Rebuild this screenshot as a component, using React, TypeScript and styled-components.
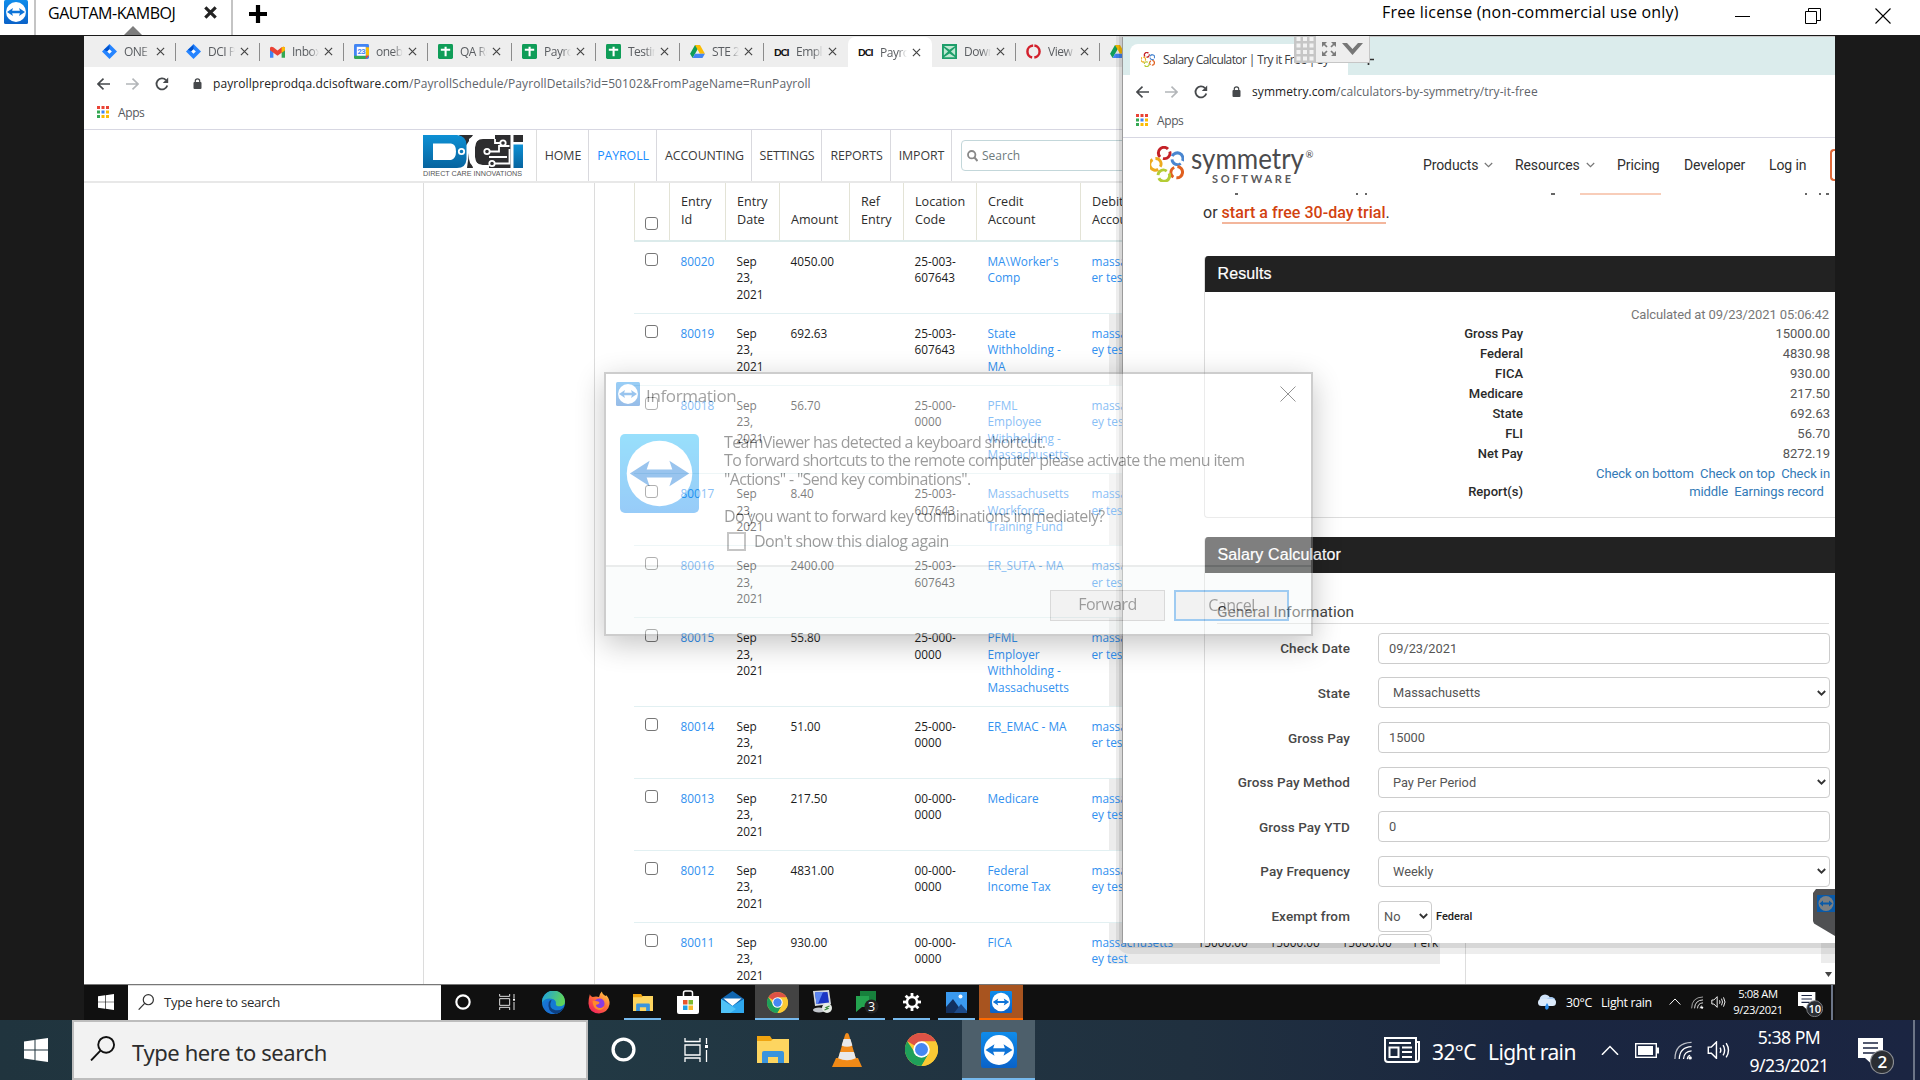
import React from "react";
import styled, { createGlobalStyle, css } from "styled-components";

const ui = `"Open Sans", "Noto Sans", sans-serif`;
const noto = `"Noto Sans", "Open Sans", sans-serif`;
const roboto = `Roboto, "Liberation Sans", sans-serif`;

const Global = createGlobalStyle`
  html, body { margin: 0; padding: 0; }
  body { width: 1920px; height: 1080px; overflow: hidden; background: #1a1a1a; font-family: ${ui}; }
  * { box-sizing: border-box; }
  svg { display: block; flex: none; }
`;

/* ---------- outer shell ---------- */
const Shell = styled.div`
  width: 1920px; height: 1080px; display: flex; flex-direction: column; background: #1a1a1a; overflow: hidden;
`;
const TitleBar = styled.header`
  height: 36px; flex: none; background: #fff; border-bottom: 1px solid #1a1a1a; display: flex; align-items: stretch;
`;
const TitleLogo = styled.div`
  width: 36px; padding-left: 4px; border-right: 2px solid #c4c4c4;
`;
const SessionTab = styled.div`
  width: 197px; border-right: 2px solid #c4c4c4; padding: 2px 14px 0 12px; display: flex; align-items: flex-start; justify-content: space-between; position: relative;
  font-size: 16px; line-height: 22px; color: #000; white-space: nowrap; letter-spacing: -0.45px;
  svg { margin-top: 4px; }
  &::after { content: ""; position: absolute; left: 88px; bottom: 0; border: 9px solid transparent; border-bottom-color: #7d7d7d; border-top: 0; }
`;
const NewTab = styled.div` padding: 5px 0 0 16px; flex: 1; `;
const License = styled.div`
  font-size: 16px; line-height: 24px; color: #000; white-space: nowrap; width: 351px; letter-spacing: 0.19px;
`;
const WindowButtons = styled.div`
  display: flex; width: 187px; gap: 54px; padding: 8px 0 0 2px;
`;
const Session = styled.main`
  flex: none; height: 984px; padding: 0 85px 0 84px; background: #1a1a1a;
`;
const Desktop = styled.div`
  position: relative; width: 1751px; height: 984px; background: #fff; overflow: hidden; display: flex; flex-direction: column;
`;

/* ---------- browser chrome ---------- */
const Browser = styled.section` height: 948px; display: flex; flex-direction: column; background: #fff; overflow: hidden; position: relative; `;
const TabStrip = styled.div` height: 31px; flex: none; background: #eee; display: flex; padding-left: 8px; `;
const Tab = styled.div<{ $active?: boolean; $line?: boolean }>`
  width: 84px; flex: none; padding: 0 10px; display: flex; align-items: center; font-size: 12px; letter-spacing: -0.5px; color: #5a5d61; position: relative;
  ${p => p.$line && css`&::after { content: ""; position: absolute; right: 0; top: 7px; height: 18px; width: 1px; background: #8c8c8c; }`}
  ${p => p.$active && css`background: #fff; border-radius: 7px 7px 0 0; margin-top: 1px;`}
`;
const TabText = styled.span`
  width: 27px; margin: 0 5px 0 7px; overflow: hidden; white-space: nowrap; mask-image: linear-gradient(to right, #000 65%, transparent 100%);
`;
const DciMark = styled.b` width: 15px; font: 900 10px/12px "Lato", sans-serif; color: #111; letter-spacing: -0.9px; `;
const AddressRow = styled.div`
  height: 33px; flex: none; display: flex; align-items: center; padding-left: 13px; white-space: nowrap;
`;
const NavIcons = styled.div` display: flex; gap: 16px; width: 106px; align-items: center; svg:last-child { margin-left: 8px; } `;
const Url = styled.span<{ $ls: number }>`
  font-size: 12px; color: #60646a; margin-left: 10px; letter-spacing: ${p => p.$ls}px; b { font-weight: 400; color: #222; }
`;
const Bookmarks = styled.div`
  height: 30px; flex: none; border-bottom: 1px solid #d7d7e2; padding: 0 0 5px 13px; display: flex; align-items: center; gap: 9px; font-size: 12px; letter-spacing: -0.4px; color: #55585c;
`;

/* ---------- payroll site ---------- */
const SiteHeader = styled.div` height: 53px; flex: none; border-bottom: 2px solid #e8e8e8; display: flex; padding-left: 339px; `;
const Logo = styled.div` width: 114px; padding-top: 5px; border-right: 1px solid #ddd; `;
const MenuItem = styled.div<{ $w: number; $on?: boolean }>`
  width: ${p => p.$w}px; flex: none; border-right: 1px solid #d9d9de; display: flex; align-items: center; justify-content: center; font-size: 12.4px; letter-spacing: -0.1px; padding-left: 1px;
  color: ${p => (p.$on ? "#1a8cff" : "#3b3b3b")};
`;
const SearchField = styled.div`
  margin: 10px 0 0 9px; width: 260px; height: 31px; border: 1px solid #c3d7da; border-radius: 4px; display: flex; align-items: center; gap: 4px; padding-left: 5px; font-size: 12px; color: #6d7a7d;
`;
const SiteBody = styled.div` flex: 1; display: flex; overflow: hidden; `;
const Gutter = styled.div<{ $w: number }>` width: ${p => p.$w}px; flex: none; border-right: 1px solid #dcdcdc; `;
const Entries = styled.div` margin-left: 39px; width: 832px; flex: none; border-right: 1px solid #ddd; `;
const grid = css` display: grid; grid-template-columns: 35px 56px 54px 70px 54px 73px 104px 106px 72px 72px 72px 60px; `;
const HeadRow = styled.div`
  ${grid} height: 58.5px; border-bottom: 2px solid #dcebeb; font-size: 12.6px; line-height: 18.3px; color: #2c2c2c;
`;
const HeadCell = styled.div`
  display: flex; align-items: flex-end; padding: 0 0 10px 11px; border-left: 1px solid #e3e3d6; white-space: pre;
`;
const Row = styled.div<{ $tall?: boolean; $last?: boolean }>`
  ${grid} height: ${p => (p.$tall ? 88.5 : 72)}px; border-bottom: 1px solid #e2f0f2; font-size: 11.8px; line-height: 16.5px; color: #1c1c1c;
  ${p => p.$last && css`background: linear-gradient(to right, transparent 475px, #ececec 475px 806px, transparent 806px) 0 0 / 100% 41px no-repeat;`}
`;
const Cell = styled.div<{ $link?: boolean; $shade?: boolean }>`
  padding: 11px 0 0 11.5px; white-space: pre; letter-spacing: 0;
  color: ${p => (p.$link ? "#3291f0" : "inherit")};
  ${p => p.$shade && css`background: linear-gradient(to right, transparent 29px, #ececec 29px);`}
`;
const Box = styled.span` display: block; width: 13px; height: 13px; border: 1.5px solid #777; border-radius: 3px; margin: 0 0 0 -1px; background: #fff; `;
const ScrollEdge = styled.div`
  position: absolute; left: 1737px; top: 907px; width: 14px; height: 41px; background: linear-gradient(#ececec 20px, #fff 20px); display: flex; align-items: flex-end; justify-content: center; padding-bottom: 7px;
`;

/* ---------- calculator window ---------- */
const CalcWindow = styled.section`
  position: absolute; left: 1038px; top: 1px; width: 713px; height: 906px; background: #fff; border-left: 1px solid #9b9b9b; overflow: hidden; display: flex; flex-direction: column;
`;
const WindowShade = styled.div`
  position: absolute; left: 1032px; top: 0; width: 719px; height: 918px; background: rgba(0, 0, 0, 0.07); border-radius: 0 0 0 14px;
  &::after { content: ""; position: absolute; left: 3px; right: 0; top: 0; bottom: 6px; border-radius: 0 0 0 9px; background: rgba(0, 0, 0, 0.09); }
`;
const CalcTabs = styled.div` height: 38px; flex: none; background: #dbecec; padding: 7px 0 0 7px; display: flex; align-items: center; gap: 15px; `;
const CalcTab = styled.div`
  width: 218px; height: 31px; background: #fff; border-radius: 8px 8px 0 0; display: flex; align-items: center; gap: 8px; padding-left: 11px; font-size: 12px; letter-spacing: -0.6px; color: #3d4043; white-space: nowrap;
`;
const SymHeader = styled.div` height: 54px; flex: none; display: flex; align-items: center; padding-left: 27px; `;
const SymMenu = styled.nav`
  margin-left: auto; height: 54px; display: flex; align-items: center; font-family: ${roboto}; font-size: 14px; color: #2f2f2f; white-space: nowrap;
`;
const SymItem = styled.span<{ $w: number }>` width: ${p => p.$w}px; display: flex; align-items: center; gap: 6px; letter-spacing: -0.1px; `;
const Signup = styled.span` width: 5px; height: 32px; border: 2px solid #e06a3a; border-right: 0; border-radius: 4px 0 0 4px; `;
const CutLine = styled.div` height: 4px; flex: none; position: relative; `;
const Fleck = styled.i<{ $x: number; $w: number; $c?: string }>`
  position: absolute; left: ${p => p.$x}px; bottom: 1px; height: 2px; width: ${p => p.$w}px; background: ${p => p.$c || "#666"};
`;
const Trial = styled.p`
  margin: 5px 0 0 80px; font: 400 16px/24px ${roboto}; color: #333; height: 55px; flex: none; letter-spacing: 0.03px;
  b { font-weight: 500; color: #d2420f; border-bottom: 2px solid #f3b69c; padding-bottom: 0; }
`;
const Panel = styled.div<{ $h: number }>`
  margin-left: 81px; height: ${p => p.$h}px; flex: none; border-left: 1px solid #ddd; border-bottom: 1px solid #ddd; border-radius: 4px 0 0 4px; font-family: ${roboto}; overflow: hidden;
`;
const PanelTitle = styled.div`
  height: 36px; background: #222; color: #fff; font: 400 16px/35px "Liberation Sans", sans-serif; margin-left: -1px; padding-left: 13.5px; letter-spacing: 0.1px; -webkit-text-stroke: 0.2px #fff;
`;
const Results = styled.div` padding: 13px 6px 0 0; font-size: 13px; color: #555; `;
const Stamp = styled.div` text-align: right; line-height: 20px; height: 19px; font-size: 13px; color: #777; letter-spacing: -0.11px; `;
const ResultRow = styled.div`
  display: grid; grid-template-columns: 318px 307px; height: 20px; line-height: 20px; text-align: right;
  b { font-weight: 500; color: #2a2a2a; }
`;
const ReportRow = styled.div`
  display: grid; grid-template-columns: 318px 307px; line-height: 18px; text-align: right; align-items: end; margin-top: 1px;
  b { font-weight: 500; color: #2a2a2a; } span { color: #337ab7; white-space: pre; letter-spacing: -0.08px; }
`;
const Legend = styled.div`
  margin: 29px 6px 0 12px; height: 22px; border-bottom: 1px solid #ddd; font-size: 15.5px; line-height: 20px; color: #444;
`;
const Field = styled.div<{ $tight?: boolean }>` display: flex; align-items: center; height: 30.5px; margin-bottom: ${p => (p.$tight ? 3 : 14.15)}px; `;
const Label = styled.label` width: 145px; text-align: right; font-size: 13.5px; font-weight: 500; color: #484848; margin-right: 28px; letter-spacing: 0.1px; `;
const Input = styled.div<{ $w?: number; $select?: boolean }>`
  width: ${p => p.$w || 452}px; height: 31px; border: 1px solid #ccc; border-radius: 4px; padding: 0 3px 0 ${p => (p.$w ? 5 : p.$select ? 14 : 10)}px; display: flex; align-items: center; justify-content: space-between; font-size: 12.8px; color: #555;
`;
const Fed = styled.b` font-size: 11px; font-weight: 500; color: #222; margin-left: 4px; `;

/* ---------- overlays ---------- */
const Grip = styled.div`
  position: absolute; left: 1210px; top: -1px; width: 76px; height: 28px; display: flex; align-items: center; background: #eeeeee; border: 1px solid #c6c6c6; border-top: 0; gap: 6px;
`;
const SideFlap = styled.div` position: absolute; left: 1729px; top: 853px; width: 22px; height: 48px; `;
const Dialog = styled.div`
  position: absolute; left: 520px; top: 336px; width: 709px; height: 264px; background: #fff; border: 2px solid #8a8a8a; opacity: 0.42; box-shadow: 0 8px 28px rgba(0, 0, 0, 0.55); display: flex; flex-direction: column; color: #000;
`;
const DialogHead = styled.div`
  height: 44px; flex: none; display: flex; align-items: flex-start; padding: 8px 15px 0 10px; font: 400 17px/28px ${ui}; letter-spacing: -0.35px; color: #222;
  span { margin-left: 6px; flex: 1; } svg:last-child { margin-top: 4px; }
`;
const DialogBody = styled.div`
  flex: 1; display: flex; padding: 16px 0 0 14px; gap: 25px; font: 400 16px/18.4px ${ui}; letter-spacing: -0.66px; color: #111; white-space: pre;
`;
const DialogText = styled.div` margin-top: -1px; `;
const CheckLine = styled.div` display: flex; align-items: center; gap: 8px; margin: 6px 0 0 3px; height: 20px; letter-spacing: -0.5px; i { width: 19px; height: 19px; border: 2px solid #777; } `;
const DialogFoot = styled.div`
  height: 69px; flex: none; border-top: 2px solid #cfd3d3; background: #f5faf8; display: flex; justify-content: flex-end; padding: 23px 22px 0 0; gap: 9px;
`;
const Button = styled.div<{ $focus?: boolean }>`
  width: 115px; height: 31px; background: #e1e1e1; border: ${p => (p.$focus ? "2px solid #1c86e0" : "1px solid #a5a5a5")}; font: 400 16px/27px ${ui}; letter-spacing: -0.5px; text-align: center; color: #111;
`;

/* ---------- remote task bar ---------- */
const RemoteBar = styled.div` height: 36px; flex: none; background: #101010; border-top: 1px solid #777; display: flex; color: #fff; `;
const StartCell = styled.div` width: 44px; display: flex; align-items: center; justify-content: center; padding: 0 1px 2px 0; `;
const RemoteSearch = styled.div`
  width: 313px; background: #fff; border-top: 1px solid #ddd; display: flex; align-items: center; gap: 10px; padding: 0 0 2px 10px; color: #2b2b2b; font-size: 13.2px; letter-spacing: -0.28px;
`;
const AppCell = styled.div<{ $w?: number; $bg?: string; $bar?: string; $inset?: number }>`
  width: ${p => p.$w || 45}px; flex: none; display: flex; align-items: center; justify-content: center; position: relative; padding-bottom: 1px; background: ${p => p.$bg || "transparent"};
  ${p => p.$bar && css`&::after { content: ""; position: absolute; bottom: 0; left: ${p.$inset ?? 4}px; right: ${p.$inset ?? 4}px; height: 2px; background: ${p.$bar}; }`}
`;
const RemoteTray = styled.div` margin-left: auto; width: 298px; display: flex; align-items: center; font-size: 12.4px; white-space: nowrap; letter-spacing: -0.35px; padding-bottom: 1px; `;
const Slot = styled.div<{ $w: number }>` width: ${p => p.$w}px; flex: none; position: relative; `;
const NoticeSlot = styled(Slot)<{ $x: number; $y: number }>` padding: ${p => p.$y}px 0 0 ${p => p.$x}px; `;
const SmallClock = styled.div` width: 64px; text-align: center; font-size: 11.2px; line-height: 16.5px; letter-spacing: -0.4px; `;

/* ---------- host task bar ---------- */
const HostBar = styled.footer`
  height: 60px; flex: none; display: flex; background: linear-gradient(to right, #20343e 0%, #223944 30%, #20303f 62%, #1a2640 80%, #1b2542 100%); color: #fff;
`;
const HostSearch = styled.div`
  width: 516px; height: 60px; border: 2px solid #bdbdbd; background: #f2f2f2; display: flex; align-items: center; padding: 3px 0 0 16px; gap: 17px; font: 400 22px/30px ${noto}; color: #2d2d2d; letter-spacing: -0.4px; svg { margin-bottom: 6px; }
`;
const HostTray = styled.div`
  margin-left: auto; width: 536px; display: flex; align-items: center; font: 400 21px/30px ${noto}; white-space: nowrap; letter-spacing: -0.6px;
`;
const Clock = styled.div` width: 86px; padding-left: 2px; text-align: center; font-size: 17.6px; line-height: 28px; letter-spacing: -0.5px; margin-top: 1px; `;
const Weather = styled(Slot)` padding-top: 4px; `;
const PeekLine = styled.div<{ $h: number }>` width: 2px; height: ${p => p.$h}px; background: #6c7588; `;

/* ---------- drawings ---------- */
const TV = ({ s, flat }: { s: number; flat?: boolean }) => (
  <svg width={s} height={s} viewBox="0 0 40 40">
    <defs><linearGradient id={"tv" + s} x1="0" y1="0" x2="0" y2="1"><stop offset="0" stopColor={flat ? "#0db5f8" : "#0f8ceb"} /><stop offset="1" stopColor={flat ? "#0a86f0" : "#0a62c8"} /></linearGradient></defs>
    <rect width="40" height="40" rx="2.5" fill={`url(#tv${s})`} />
    <circle cx="20" cy="20" r="16.6" fill="#fff" />
    <path d="M5 20 15 13.5 13.5 18h13L25 13.5 35 20 25 26.500 26.500 22h-13L15 26.500z" fill="#0e74d8" />
  </svg>
);
const X = ({ s, w = 1.3, c = "#444" }: { s: number; w?: number; c?: string }) => (
  <svg width={s} height={s} viewBox="0 0 10 10"><path d="M1 1 9 9M9 1 1 9" stroke={c} strokeWidth={w} fill="none" /></svg>
);
const Jira = () => (
  <svg width="15" height="15" viewBox="0 0 16 16"><path d="M8 0 16 8 8 16 0 8z" fill="#2684ff" /><path d="M8 1v5l-2 2-4-2z" fill="#0052cc" /><path d="M8 5.500 10.500 8 8 10.500 5.500 8z" fill="#fff" /></svg>
);
const Gmail = () => (
  <svg width="15" height="12" viewBox="0 0 16 12"><path d="M0 1.500V12h3.600V5z" fill="#4285f4" /><path d="M16 1.500V12h-3.600V5z" fill="#34a853" /><path d="M0 1.500C1 0 2 0 3.600 1L8 4.500 12.400 1C14 0 15 0 16 1.500V4L8 10 0 4z" fill="#ea4335" /><path d="M12.400 1C14 0 15.500 0 16 1.500V4l-3.600 2.700z" fill="#fbbc04" /></svg>
);
const Cal = () => (
  <svg width="15" height="15" viewBox="0 0 16 16"><rect width="16" height="16" rx="1.500" fill="#4285f4" /><path d="M12.500 3.500H16v9h-3.500z" fill="#fbbc04" /><path d="M0 12.500h12.500V16H1.500A1.500 1.500 0 0 1 0 14.500z" fill="#34a853" /><path d="M12.500 12.500H16L12.500 16z" fill="#ea4335" /><rect x="3" y="3" width="9.500" height="9.500" fill="#fff" /><text x="7.700" y="10.700" textAnchor="middle" fontSize="8" fontWeight="700" fontFamily="Roboto" fill="#4285f4">23</text></svg>
);
const Sheet = () => (
  <svg width="15" height="15" viewBox="0 0 16 16"><rect width="16" height="16" rx="1.500" fill="#0f9d58" /><path d="M3 5h10v2.200H9.200V13H7V7.200H3z M7 3h2.200v3H7z" fill="#fff" /></svg>
);
const Drive = () => (
  <svg width="15" height="13" viewBox="0 0 16 14"><path d="M5.300 0h5.400L5.400 9.300 2.700 14 0 9.300z" fill="#0f9d58" /><path d="M5.300 0h5.400L16 9.300h-5.400z" fill="#fbbc04" /><path d="M5.400 9.300H16L13.300 14H2.700z" fill="#4285f4" /></svg>
);
const Green = () => (
  <svg width="15" height="15" viewBox="0 0 16 16"><rect width="16" height="16" fill="#1e9e6a" /><path d="M2 2H14L8 6z M2 14H14L8 10z M2 4 6.500 8 2 12z M14 4 9.500 8 14 12z" fill="#bfe8d2" /></svg>
);
const Ring = () => (
  <svg width="15" height="15" viewBox="0 0 16 16"><circle cx="8" cy="8" r="6.500" fill="none" stroke="#d3202c" strokeWidth="2.600" strokeDasharray="18 2.400" strokeDashoffset="-1" transform="rotate(-90 8 8)" /></svg>
);
const Nav = () => (
  <NavIcons>
    {[0, 1].map(i => (
      <svg key={i} width="13" height="12" viewBox="0 0 13 12"><path d={i ? "M0 6h12M6.500 .7 12 6l-5.500 5.300" : "M13 6H1M6.500 .7 1 6l5.500 5.300"} fill="none" stroke={i ? "#b3b6b9" : "#46494c"} strokeWidth="1.600" /></svg>
    ))}
    <svg width="14" height="14" viewBox="0 0 14 14"><path d="M12.300 8.500A5.500 5.500 0 1 1 11 3.100" fill="none" stroke="#46494c" strokeWidth="1.800" /><path d="M13.200 .6V6H7.800z" fill="#46494c" /></svg>
    <svg width="9" height="11" viewBox="0 0 9 11"><rect x=".5" y="4" width="8" height="7" rx="1" fill="#46494c" /><path d="M2.300 5V3a2.200 2.200 0 0 1 4.400 0v2" fill="none" stroke="#46494c" strokeWidth="1.200" /></svg>
  </NavIcons>
);
const AppsGrid = () => (
  <svg width="12" height="12" viewBox="0 0 12 12">
    {["#ea4335", "#ea4335", "#ea4335", "#34a853", "#4285f4", "#fbbc04", "#34a853", "#fbbc04", "#fbbc04"].map((c, i) => (
      <rect key={i} x={(i % 3) * 4.500} y={Math.floor(i / 3) * 4.500} width="3" height="3" fill={c} />
    ))}
  </svg>
);
const Flower = ({ s }: { s: number }) => (
  <svg width={s} height={s * 1.060} viewBox="0 0 34 36">
    {[["#c42127", 14.500, 7, 0], ["#4a86d0", 27.500, 13, 70], ["#e0601f", 26.500, 26.500, 140], ["#b4cc35", 13.500, 29.500, 200], ["#edab1f", 5.500, 18, 285]].map(([c, x, y, r], i) => (
      <g key={i} transform={`translate(${x} ${y}) rotate(${r})`}>
        <path d="M-4.500 4A5.400 5.400 0 0 1 3.500 -4" fill="none" stroke={c as string} strokeWidth="3" />
        <path d="M5.300 -1.500A5.400 5.400 0 0 1 -1.500 5.300" fill="none" stroke={c as string} strokeWidth="2.800" />
      </g>
    ))}
  </svg>
);
const Dci = () => (
  <svg width="100" height="42" viewBox="0 0 100 42">
    <defs><linearGradient id="dci" x1="0" y1="0" x2="0" y2="1"><stop offset="0" stopColor="#0d90d4" /><stop offset="1" stopColor="#07649f" /></linearGradient></defs>
    <path d="M36 0H50L42 12z M44 33 46 18 50 33z" fill="#2d2d2f" />
    <path d="M0 0H34Q43.500 1 43.500 10V24Q43 33 34 33H0z" fill="url(#dci)" /><path d="M10 8.500H28Q33 9 33 16.500T28 25H10z" fill="#fff" />
    <path d="M48 0H88V33H64V30H59Q52 29 52 22V13Q52 4 60 4H72V0z" fill="#2d2d2f" />
    <path d="M46 4Q50 0 60 0H70V3H60Q52 4 52 12V22Q52 30 60 30H66V33H57Q47 33 46 24z" fill="#fff" />
    <path d="M64 16.500H76V11H86.500M79 8H72V4M66 22H84M69 28.500H86.500V14" stroke="#fff" strokeWidth="1.800" fill="none" />
    {[[38.500, 16.500], [64, 16.500], [80, 8], [69, 28.500]].map(([x, y]) => <circle key={x} cx={x} cy={y} r="2.700" fill={x < 40 ? "#0b79b8" : "#2d2d2f"} stroke="#fff" strokeWidth="1.800" />)}
    <rect x="87.500" width="3" height="33" fill="#fff" /><rect x="90.500" y="0" width="9.500" height="7" fill="#2d2d2f" /><rect x="90.500" y="9.500" width="9.500" height="23.500" fill="url(#dci)" />
    <text x="0" y="41" textLength="99" lengthAdjust="spacingAndGlyphs" fontFamily="Liberation Sans" fontSize="6.600" fill="#555">DIRECT CARE INNOVATIONS</text>
  </svg>
);
const SymLogo = () => (
  <svg width="170" height="42" viewBox="0 0 170 42">
    <g transform="translate(0 2)"><Flower s={34} /></g>
    <text x="41" y="24.500" textLength="113" lengthAdjust="spacingAndGlyphs" fontFamily="Lato" fontSize="28" fill="#4b4b4d">symmetry</text>
    <text x="155.500" y="14" fontFamily="Lato" fontSize="9.500" fill="#4b4b4d">®</text>
    <text x="62" y="38.500" textLength="79" fontFamily="Lato" fontSize="11" fontWeight="700" fill="#5a5a5c">SOFTWARE</text>
  </svg>
);
const Down = ({ c = "#333", w = 1.800 }: { c?: string; w?: number }) => (
  <svg width="9" height="6" viewBox="0 0 9 6"><path d="M.8 1 4.500 4.700 8.200 1" fill="none" stroke={c} strokeWidth={w} /></svg>
);
const Win = ({ s }: { s: number }) => (
  <svg width={s} height={s} viewBox="0 0 24 24"><path d="M0 3.500 10.500 2v9.500H0zM11.500 1.800 24 0v11.500H11.500zM0 12.500h10.500V22L0 20.500zM11.500 12.500H24V24l-12.500-1.800z" fill="#fff" /></svg>
);
const Glass = ({ s, c }: { s: number; c: string }) => (
  <svg width={s} height={s} viewBox="0 0 24 24"><circle cx="15.500" cy="8.500" r="7.600" fill="none" stroke={c} strokeWidth="1.800" /><path d="M10 14 1 23.500" stroke={c} strokeWidth="1.800" /></svg>
);
const Cortana = ({ s }: { s: number }) => (
  <svg width={s} height={s} viewBox="0 0 24 24"><circle cx="12" cy="12" r="10" fill="none" stroke="#fff" strokeWidth="3.200" /></svg>
);
const TaskView = ({ s }: { s: number }) => (
  <svg width={s} height={s} viewBox="0 0 24 24"><path d="M1 0v3.500h15V0M1 24v-4h15v4M1 7h15v10H1zM22.500 0v6M22.500 12v12" fill="none" stroke="#fff" strokeWidth="1.300" /><rect x="21" y="7" width="3" height="3" fill="#fff" /></svg>
);
const Folder = ({ s }: { s: number }) => (
  <svg width={s} height={s * 0.850} viewBox="0 0 32 27"><path d="M0 0h13l2 3h17v24H0z" fill="#f0a410" /><path d="M0 5h14l2-2h16v24H0z" fill="#fdd560" /><path d="M5 27V17q0-2 2-2h18q2 0 2 2v10h-6v-6H11v6z" fill="#3a94dd" /></svg>
);
const Chrome = ({ s }: { s: number }) => (
  <svg width={s} height={s} viewBox="0 0 32 32"><circle cx="16" cy="16" r="16" fill="#fbc934" /><path d="M16 16 2.140 8A16 16 0 0 1 29.860 8z" fill="#dd5246" /><path d="M2.140 8A16 16 0 0 0 16 32L22.900 20 9.500 19z" fill="#1fa05a" /><path d="M16 8H29.860A16 16 0 0 1 16 32L22.900 20z" fill="#fbc934" /><circle cx="16" cy="16" r="8" fill="#fff" /><circle cx="16" cy="16" r="6.300" fill="#4687f2" /></svg>
);
const Edge = () => (
  <svg width="23" height="23" viewBox="0 0 24 24"><defs><linearGradient id="eg" x1="0" y1="0" x2="1" y2=".3"><stop offset="0" stopColor="#1b9fe8" /><stop offset="1" stopColor="#5fd35a" /></linearGradient></defs><circle cx="12" cy="12" r="12" fill="#1479d4" /><path d="M0 12A12 12 0 0 1 24 11Q24 16 18 16 14 16 14.500 13 15 9 10 8 3 7 0 12z" fill="url(#eg)" /><path d="M9 10Q4 20 15 23.600 6 25 2 18 2 11 9 10z" fill="#1a6fd0" /><path d="M10 9q-4 9 4 11 5 1 9-3-3 6-9 7Q5 21 7 12q1-3 3-3z" fill="#0d3f80" /></svg>
);
const Firefox = () => (
  <svg width="22" height="23" viewBox="0 0 24 24"><defs><linearGradient id="ff" x1="1" y1="0" x2=".2" y2="1"><stop offset="0" stopColor="#ffe14a" /><stop offset=".5" stopColor="#ff7139" /><stop offset="1" stopColor="#f01e5c" /></linearGradient></defs><path d="M2 3q1 3 3 3 4-1 7 0 1-4 3-6 1 4 4 5l1-1q4 4 3.500 10Q22 23 12 24 1 23 .5 13 .5 8 2 3z" fill="url(#ff)" /><circle cx="12.500" cy="13" r="5.500" fill="#8a3ce0" /><path d="M5 10q4 0 6 1 3 1 0 3-3 0-2 2 4 4 9 0-2 5-7 4-6-2-6-10z" fill="#ff8a2b" /></svg>
);
const Store = () => (
  <svg width="22" height="24" viewBox="0 0 22 24"><path d="M6.500 7V3q0-2 2-2h5q2 0 2 2v4" fill="none" stroke="#fff" strokeWidth="1.500" /><path d="M0 6h22v16q0 2-2 2H2q-2 0-2-2z" fill="#fff" /><path d="M6 10h4.500v4.500H6z" fill="#e8562a" /><path d="M11.500 10H16v4.500h-4.500z" fill="#7dba2f" /><path d="M6 15.500h4.500V20H6z" fill="#1ea0e6" /><path d="M11.500 15.500H16V20h-4.500z" fill="#f7b92a" /></svg>
);
const Mail = () => (
  <svg width="23" height="22" viewBox="0 0 23 22"><path d="M0 8 11.500 0 23 8v14H0z" fill="#1066b0" /><path d="M2.500 7.500h18L11.500 15z" fill="#fff" /><path d="M0 8 11.500 15 23 8v14H0z" fill="#2fa8ee" /><path d="M0 8 15 18 9 22H0z" fill="#50c3f7" /></svg>
);
const Monitor = () => (
  <svg width="22" height="24" viewBox="0 0 22 24"><path d="M2 1 18 0 20 14 4 16z" fill="#d4d8de" /><path d="M4 2.500 16.500 2 18 12.500 5.500 14z" fill="#1a35c4" /><path d="M4 2.500 12 2 7 13.800 5.500 14z" fill="#5c86f2" /><ellipse cx="8" cy="20" rx="6" ry="2.500" fill="#c2c6cc" /><circle cx="16" cy="18" r="5" fill="#e6ebe6" /><path d="M13.500 20 17 18.500 15 17.500 18.500 16" stroke="#3a8a3a" fill="none" strokeWidth="1.200" /></svg>
);
const Chat = () => (
  <svg width="24" height="24" viewBox="0 0 24 24"><path d="M5 1h16v13H5z" fill="#17803c" /><path d="M1 6h13v11H7l-6 5z" fill="#24a34f" /><circle cx="16.500" cy="16.500" r="7" fill="#222" /><text x="16.500" y="21" textAnchor="middle" fontFamily="Open Sans" fontSize="12.500" fill="#fff">3</text></svg>
);
const Gear = () => (
  <svg width="18" height="18" viewBox="0 0 18 18"><circle cx="9" cy="9" r="5" fill="none" stroke="#fff" strokeWidth="2.400" />{[0, 45, 90, 135, 180, 225, 270, 315].map(a => <rect key={a} x="7.600" y="0" width="2.800" height="3.500" fill="#fff" transform={`rotate(${a} 9 9)`} />)}</svg>
);
const Photos = () => (
  <svg width="21" height="21" viewBox="0 0 21 21"><rect width="21" height="21" fill="#3a9af0" /><path d="M0 15 7 7 17 21H0z" fill="#12305f" /><path d="M8 21 15 12 21 19v2z" fill="#1d4c8c" /><circle cx="14.500" cy="4.500" r="2" fill="#fff" /></svg>
);
const Vlc = () => (
  <svg width="32" height="34" viewBox="0 0 32 34"><path d="M5 25h22l4 9H1z" fill="#f08a17" /><path d="M16 0q1.500 0 2 2l7 24q-9 5-18 0L14 2q.5-2 2-2z" fill="#f28c1c" /><path d="M12.600 6h6.800l2 6.500q-5.400 2.500-10.800 0z M9 19h14l1.800 6.200q-8.800 4-17.600 0z" fill="#e9e9ea" /></svg>
);
const Cloud = () => (
  <svg width="20" height="16" viewBox="0 0 20 16"><circle cx="8" cy="6" r="5.500" fill="#cfe3fa" /><circle cx="14" cy="7.500" r="4.500" fill="#a9cdf5" /><rect x="1" y="5" width="18" height="7" rx="3.500" fill="#dbeafb" /><path d="M10 9q3 4 1 6t-3-1q0-2 2-5z" fill="#2b8ae8" /></svg>
);
const Chevron = ({ s }: { s: number }) => (
  <svg width={s} height={s * 0.600} viewBox="0 0 18 11"><path d="M.8 10 9 1.500 17.200 10" fill="none" stroke="#fff" strokeWidth="1.500" /></svg>
);
const Wifi = ({ s }: { s: number }) => (
  <svg width={s} height={s} viewBox="0 0 20 20"><g fill="none" stroke="#fff" strokeWidth="1.300"><path d="M1 19Q1 2 18.500 1.500" opacity=".7" /><path d="M5.500 19Q6 6.500 18.500 6" /><path d="M10 19Q10.500 11 18.500 10.500" /><path d="M14 19Q14.500 15.500 17 15" /></g><circle cx="17" cy="17.800" r="1.800" fill="#fff" /></svg>
);
const Vol = ({ s }: { s: number }) => (
  <svg width={s} height={s * 0.800} viewBox="0 0 22 18"><g fill="none" stroke="#fff" strokeWidth="1.400"><path d="M1 6h3l5-5v16l-5-5H1z" /><path d="M12.500 6.500q1.500 2.500 0 5M15.500 4q3 5 0 10M18.500 2q4.500 7 0 14" /></g></svg>
);
const News = () => (
  <svg width="36" height="26" viewBox="0 0 36 26"><g fill="none" stroke="#fff" strokeWidth="2"><path d="M1 1h31v24H4q-3 0-3-3zM32 5h3v17q0 3-3 3" /><path d="M5.500 10.500h9v9.500h-9zM5 6h22M18 10.500h10M18 15h10M18 20h10" /></g></svg>
);
const Battery = () => (
  <svg width="24" height="15" viewBox="0 0 24 15"><rect x=".7" y=".7" width="20.600" height="13.600" fill="none" stroke="#fff" strokeWidth="1.400" /><rect x="3" y="3" width="15" height="9" fill="#fff" /><rect x="22" y="4.500" width="2" height="6" fill="#fff" /></svg>
);
const Notice = ({ n, w }: { n: string; w: number }) => (
  <svg width={w} height={w} viewBox="0 0 36 36"><path d="M0 0h25v20H15l-2.500 5L7 20H0z" fill="#fff" /><path d="M5 5h15M5 10h15M5 15h12" stroke="#1b2542" strokeWidth="1.600" /><circle cx="24" cy="24" r="11.500" fill="#2b2e33" stroke="#8a8d92" strokeWidth="1.200" /><text x="24" y="30" textAnchor="middle" fontFamily="Open Sans" fontWeight="600" fontSize={n.length > 1 ? 16 : 17} fill="#fff">{n}</text></svg>
);

/* ---------- data ---------- */
const tabs: [React.ReactNode, string][] = [
  [<Jira />, "ONE"], [<Jira />, "DCI Pa"], [<Gmail />, "Inbox"], [<Cal />, "oneb"], [<Sheet />, "QA Re"], [<Sheet />, "Payro"], [<Sheet />, "Testin"],
  [<Drive />, "STE 2"], [<DciMark>DCI</DciMark>, "Emplo"], [<DciMark>DCI</DciMark>, "Payro"], [<Green />, "Down"], [<Ring />, "View"], [<Drive />, "Dri"],
];
const menu: [string, number][] = [["HOME", 52], ["PAYROLL", 68], ["ACCOUNTING", 95], ["SETTINGS", 70], ["REPORTS", 69], ["IMPORT", 61]];
const heads = ["Entry\nId", "Entry\nDate", "Amount", "Ref\nEntry", "Location\nCode", "Credit\nAccount", "Debit\nAccount"];
const rows: [string, string, string, string, string][] = [
  ["80020", "4050.00", "25-003-\n607643", "MA\\Worker's\nComp", "er test"],
  ["80019", "692.63", "25-003-\n607643", "State\nWithholding -\nMA", "ey test"],
  ["80018", "56.70", "25-000-\n0000", "PFML\nEmployee\nWithholding -\nMassachusetts", "ey test"],
  ["80017", "8.40", "25-003-\n607643", "Massachusetts\nWorkforce\nTraining Fund", "er test"],
  ["80016", "2400.00", "25-003-\n607643", "ER_SUTA - MA", "er test"],
  ["80015", "55.80", "25-000-\n0000", "PFML\nEmployer\nWithholding -\nMassachusetts", "er test"],
  ["80014", "51.00", "25-000-\n0000", "ER_EMAC - MA", "er test"],
  ["80013", "217.50", "00-000-\n0000", "Medicare", "ey test"],
  ["80012", "4831.00", "00-000-\n0000", "Federal\nIncome Tax", "ey test"],
  ["80011", "930.00", "00-000-\n0000", "FICA", "ey test"],
];
const results = [["Gross Pay", "15000.00"], ["Federal", "4830.98"], ["FICA", "930.00"], ["Medicare", "217.50"], ["State", "692.63"], ["FLI", "56.70"], ["Net Pay", "8272.19"]];
const fields: [string, string, boolean][] = [["Check Date", "09/23/2021", false], ["State", "Massachusetts", true], ["Gross Pay", "15000", false], ["Gross Pay Method", "Pay Per Period", true], ["Gross Pay YTD", "0", false], ["Pay Frequency", "Weekly", true]];
const blue = "#76b9ed";

export default function App() {
  return (
    <Shell>
      <Global />
      <TitleBar>
        <TitleLogo><TV s={24} /></TitleLogo>
        <SessionTab>GAUTAM-KAMBOJ<X s={13} w={2.4} c="#222" /></SessionTab>
        <NewTab><svg width="18" height="18" viewBox="0 0 18 18"><path d="M9 0v18M0 9h18" stroke="#000" strokeWidth="4.200" /></svg></NewTab>
        <License>Free license (non-commercial use only)</License>
        <WindowButtons>
          <svg width="16" height="16" viewBox="0 0 16 16"><path d="M0 8.500h15" stroke="#000" /></svg>
          <svg width="16" height="16" viewBox="0 0 16 16"><path d="M.5 3.500h11v12H.500zM3.500 3.500V.500h12v12h-4" fill="none" stroke="#000" /></svg>
          <svg width="16" height="16" viewBox="0 0 16 16"><path d="M.5 .5 15.500 15.500M15.500 .5 .5 15.500" stroke="#000" strokeWidth="1.100" /></svg>
        </WindowButtons>
      </TitleBar>

      <Session>
        <Desktop>
          <Browser>
            <TabStrip>
              {tabs.map(([icon, t], i) => (
                <Tab key={i} $active={i === 9} $line={i !== 8 && i !== 9}>{icon}<TabText>{t}</TabText><X s={9} /></Tab>
              ))}
            </TabStrip>
            <AddressRow><Nav /><Url $ls={0.08}><b>payrollpreprodqa.dcisoftware.com</b>/PayrollSchedule/PayrollDetails?id=50102&amp;FromPageName=RunPayroll</Url></AddressRow>
            <Bookmarks><AppsGrid />Apps</Bookmarks>
            <SiteHeader>
              <Logo><Dci /></Logo>
              {menu.map(([m, w]) => <MenuItem key={m} $w={w} $on={m === "PAYROLL"}>{m}</MenuItem>)}
              <SearchField><svg width="11" height="12" viewBox="0 0 11 12"><circle cx="4.700" cy="4.700" r="3.700" fill="none" stroke="#888" strokeWidth="1.800" /><path d="M7.500 7.500 10.500 11" stroke="#888" strokeWidth="2" /></svg>Search</SearchField>
            </SiteHeader>
            <SiteBody>
              <Gutter $w={340} /><Gutter $w={171} />
              <Entries>
                <HeadRow><HeadCell><Box /></HeadCell>{heads.map(h => <HeadCell key={h}>{h}</HeadCell>)}</HeadRow>
                {rows.map(([id, amt, loc, credit, debit], i) => (
                  <Row key={id} $tall={i === 2 || i === 5} $last={i === 9}>
                    <Cell><Box /></Cell><Cell $link>{id}</Cell><Cell>{"Sep\n23,\n2021"}</Cell><Cell>{amt}</Cell><Cell />
                    <Cell>{loc}</Cell><Cell $link>{credit}</Cell><Cell $link $shade={i % 2 === 1 && i < 9}>{"massachusetts\n" + debit}</Cell>
                    {i === 9 && <><Cell>15000.00</Cell><Cell>15000.00</Cell><Cell>15000.00</Cell><Cell>Perk</Cell></>}
                  </Row>
                ))}
              </Entries>
            </SiteBody>
            <ScrollEdge><svg width="7" height="5" viewBox="0 0 7 5"><path d="M0 0h7L3.500 5z" fill="#444" /></svg></ScrollEdge>
          </Browser>

          <WindowShade />
          <CalcWindow>
            <CalcTabs><CalcTab><Flower s={14} />Salary Calculator | Try it Free | Sy</CalcTab><svg width="11" height="11" viewBox="0 0 11 11"><path d="M5.500 0v11M0 5.500h11" stroke="#333" strokeWidth="1.700" /></svg></CalcTabs>
            <AddressRow><Nav /><Url $ls={0.08}><b>symmetry.com</b>/calculators-by-symmetry/try-it-free</Url></AddressRow>
            <Bookmarks><AppsGrid />Apps</Bookmarks>
            <SymHeader>
              <SymLogo />
              <SymMenu>
                <SymItem $w={92}>Products <Down c="#777" w={1.2} /></SymItem><SymItem $w={102}>Resources <Down c="#777" w={1.2} /></SymItem>
                <SymItem $w={67}>Pricing</SymItem><SymItem $w={85}>Developer</SymItem><SymItem $w={61}>Log in</SymItem><Signup />
              </SymMenu>
            </SymHeader>
            <CutLine><Fleck $x={112} $w={3} /><Fleck $x={233} $w={2} /><Fleck $x={242} $w={2} /><Fleck $x={428} $w={4} /><Fleck $x={457} $w={81} $c="#f8cdb9" /><Fleck $x={682} $w={2} /><Fleck $x={696} $w={2} /><Fleck $x={703} $w={3} /></CutLine>
            <Trial>or <b>start a free 30-day trial</b>.</Trial>
            <Panel $h={262}>
              <PanelTitle>Results</PanelTitle>
              <Results>
                <Stamp>Calculated at 09/23/2021 05:06:42</Stamp>
                {results.map(([k, v]) => <ResultRow key={k}><b>{k}</b>{v}</ResultRow>)}
                <ReportRow><b>Report(s)</b><span>{"Check on bottom  Check on top  Check in\nmiddle  Earnings record  "}</span></ReportRow>
              </Results>
            </Panel>
            <svg width="10" height="19" />
            <Panel $h={500}>
              <PanelTitle>Salary Calculator</PanelTitle>
              <Legend>General Information</Legend>
              <svg width="10" height="9" />
              {fields.map(([k, v, sel]) => <Field key={k}><Label>{k}</Label><Input $select={sel}>{v}{sel && <Down />}</Input></Field>)}
              <Field $tight><Label>Exempt from</Label><Input $w={54}>No<Down /></Input><Fed>Federal</Fed></Field>
              <Field><Label /><Input $w={54} /></Field>
            </Panel>
          </CalcWindow>

          <Grip>
            <svg width="21" height="27" viewBox="0 0 21 27"><rect width="21" height="27" fill="#c6c6c6" />{[...Array(12)].map((_, i) => <rect key={i} x={1.500 + (i % 3) * 6.500} y={2 + Math.floor(i / 3) * 6.500} width="4" height="4" fill="#f2f2f2" />)}</svg>
            <svg width="14" height="14" viewBox="0 0 14 14"><path d="M0 0h5L0 5zM14 0v5L9 0zM0 14V9l5 5zM14 14H9l5-5z" fill="#7b7b7b" /><path d="M2 2l3 3M12 2 9 5M2 12l3-3M12 12 9 9" stroke="#7b7b7b" strokeWidth="1.700" /></svg>
            <svg width="21" height="12" viewBox="0 0 21 12"><path d="M0 0h5l5.500 6L16 0h5L10.500 12z" fill="#777" /></svg>
          </Grip>

          <SideFlap>
            <svg width="22" height="48" viewBox="0 0 22 48"><path d="M3 0H22V47L1 34.500 0 32V4z" fill="#4f5052" /><rect x="4" y="6" width="18" height="17" fill="#0a5aa8" /><circle cx="13" cy="14.500" r="7.500" fill="#7c8083" /><path d="M6.500 14.500 10 11.500v2h6v-2l3.500 3-3.500 3v-2h-6v2z" fill="#0a5aa8" /></svg>
          </SideFlap>

          <Dialog>
            <DialogHead><TV s={24} /><span>Information</span><svg width="16" height="16" viewBox="0 0 16 16"><path d="M.5 .5 15.500 15.500M15.500 .5 .5 15.500" stroke="#000" /></svg></DialogHead>
            <DialogBody>
              <TV s={79} flat />
              <DialogText>
                {"TeamViewer has detected a keyboard shortcut.\nTo forward shortcuts to the remote computer please activate the menu item\n\"Actions\" - \"Send key combinations\".\n\nDo you want to forward key combinations immediately?"}
                <CheckLine><i />Don't show this dialog again</CheckLine>
              </DialogText>
            </DialogBody>
            <DialogFoot><Button>Forward</Button><Button $focus>Cancel</Button></DialogFoot>
          </Dialog>

          <RemoteBar>
            <StartCell><Win s={16} /></StartCell>
            <RemoteSearch><Glass s={16} c="#333" />Type here to search</RemoteSearch>
            <AppCell $w={43}><Cortana s={16} /></AppCell>
            <AppCell $w={45}><TaskView s={16} /></AppCell>
            <AppCell $w={48}><Edge /></AppCell>
            <AppCell $w={43}><Firefox /></AppCell>
            <AppCell $w={45} $bar={blue}><Folder s={20} /></AppCell>
            <AppCell $w={45}><Store /></AppCell>
            <AppCell $w={45}><Mail /></AppCell>
            <AppCell $w={44} $bg="#434343" $bar={blue} $inset={0}><Chrome s={21} /></AppCell>
            <AppCell $w={45}><Monitor /></AppCell>
            <AppCell $w={45} $bar={blue}><Chat /></AppCell>
            <AppCell $w={45} $bar={blue}><Gear /></AppCell>
            <AppCell $w={45} $bar={blue}><Photos /></AppCell>
            <AppCell $w={44} $bg="#a8541f" $bar="#ff6a00" $inset={0}><TV s={22} /></AppCell>
            <RemoteTray>
              <Slot $w={29}><Cloud /></Slot><Slot $w={35}>30°C</Slot><Slot $w={68}>Light rain</Slot>
              <Slot $w={22}><Chevron s={12} /></Slot><Slot $w={20}><Wifi s={13} /></Slot><Slot $w={15}><Vol s={15} /></Slot>
              <SmallClock>5:08 AM<br />9/23/2021</SmallClock>
              <NoticeSlot $w={41} $x={8} $y={4}><Notice n="10" w={25} /></NoticeSlot><PeekLine $h={35} />
            </RemoteTray>
          </RemoteBar>
        </Desktop>
      </Session>

      <HostBar>
        <AppCell $w={72}><Win s={24} /></AppCell>
        <HostSearch><Glass s={25} c="#111" />Type here to search</HostSearch>
        <AppCell $w={71}><Cortana s={25} /></AppCell>
        <AppCell $w={73}><TaskView s={24} /></AppCell>
        <AppCell $w={81}><Folder s={32} /></AppCell>
        <AppCell $w={68}><Vlc /></AppCell>
        <AppCell $w={81}><Chrome s={33} /></AppCell>
        <AppCell $w={73} $bg="#4d5f6b" $bar={blue} $inset={0}><TV s={36} /></AppCell>
        <HostTray>
          <Slot $w={48}><News /></Slot><Weather $w={56}>32°C</Weather><Weather $w={113}>Light rain</Weather>
          <Slot $w={34}><Chevron s={18} /></Slot><Slot $w={39}><Battery /></Slot><Slot $w={33}><Wifi s={19} /></Slot><Slot $w={38}><Vol s={23} /></Slot>
          <Clock>5:38 PM<br />9/23/2021</Clock>
          <NoticeSlot $w={82} $x={27} $y={12}><Notice n="2" w={36} /></NoticeSlot><PeekLine $h={60} />
        </HostTray>
      </HostBar>
    </Shell>
  );
}
